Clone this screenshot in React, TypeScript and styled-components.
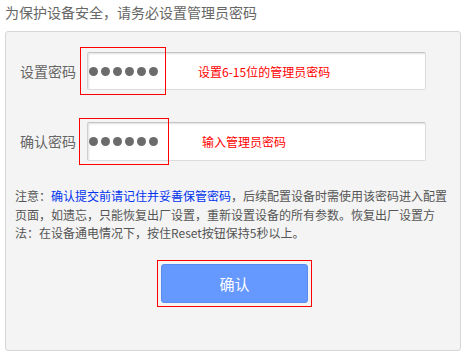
import React from "react";
import styled, { createGlobalStyle } from "styled-components";

const Global = createGlobalStyle`
  html, body { margin: 0; padding: 0; background: #ffffff; }
  body { font-family: "Noto Sans CJK SC", "Liberation Sans", sans-serif; }
`;

const Page = styled.div`
  width: 468px;
  height: 357px;
  padding: 0 7px 0 5px;
  box-sizing: border-box;
  overflow: hidden;
`;

const Title = styled.div`
  height: 31px;
  line-height: 24px;
  font-size: 14px;
  color: #666666;
`;

const Panel = styled.div`
  width: 456px;
  height: 320px;
  box-sizing: border-box;
  background: #f4f4f4;
  border: 1px solid #d6d6d6;
  border-radius: 3px;
  padding: 20px 0 0 0;
  display: flex;
  flex-direction: column;
`;

const Row = styled.div<{ $gap: number }>`
  display: flex;
  align-items: center;
  height: 38px;
  margin-bottom: ${(p) => p.$gap}px;
`;

const Label = styled.div`
  width: 81px;
  box-sizing: border-box;
  padding-left: 14px;
  font-size: 14px;
  color: #666666;
  line-height: 38px;
  white-space: nowrap;
`;

const Field = styled.div<{ $h: number }>`
  position: relative;
  width: 339px;
  height: ${(p) => p.$h}px;
  box-sizing: border-box;
  background: #ffffff;
  border: 1px solid #dcdcdc;
  border-top-color: #c4c4c4;
  border-left-color: #cfcfcf;
  border-radius: 2px;
  box-shadow: inset 1px 1px 2px rgba(0, 0, 0, 0.12);
  display: flex;
  align-items: center;
  padding-left: 1px;
`;

const Dots = styled.div`
  display: flex;
  gap: 3px;
`;

const Dot = styled.span`
  width: 9px;
  height: 9px;
  border-radius: 50%;
  background: #6b6b6b;
`;

const Hint = styled.span<{ $left: number }>`
  position: absolute;
  left: ${(p) => p.$left}px;
  top: 50%;
  transform: translateY(-50%);
  font-size: 12px;
  color: #ff0000;
  white-space: nowrap;
`;

const RedBox = styled.div<{ $l: number; $t: number; $w: number; $h: number }>`
  position: absolute;
  z-index: 2;
  left: ${(p) => p.$l}px;
  top: ${(p) => p.$t}px;
  width: ${(p) => p.$w}px;
  height: ${(p) => p.$h}px;
  box-sizing: border-box;
  border: 1px solid #ff0000;
  pointer-events: none;
`;

const Note = styled.p`
  margin: 27px 0 0 0;
  height: 56px;
  padding: 0 12px 0 9px;
  font-size: 12px;
  line-height: 18.5px;
  color: #555555;
`;

const Link = styled.span`
  color: #0033ee;
`;

const ButtonArea = styled.div`
  display: flex;
  justify-content: center;
  padding-left: 3px;
  margin-top: 17px;
`;

const ButtonWrap = styled.div`
  padding: 3px;
  border: 1px solid #ff0000;
`;

const Button = styled.button`
  width: 147px;
  height: 39px;
  background: #6699ff;
  border: 1px solid #5a8cf0;
  border-radius: 3px;
  outline: none;
  color: #ffffff;
  font-family: "Noto Sans CJK SC", "Liberation Sans", sans-serif;
  font-size: 15px;
  padding: 0;
  cursor: pointer;
  display: block;
`;

const DotRow = () => (
  <Dots>
    {Array.from({ length: 6 }).map((_, i) => (
      <Dot key={i} />
    ))}
  </Dots>
);

export default function App() {
  return (
    <>
      <Global />
      <Page>
        <Title>为保护设备安全，请务必设置管理员密码</Title>
        <Panel>
          <Row $gap={32}>
            <Label>设置密码</Label>
            <Field $h={38}>
              <DotRow />
              <Hint $left={110}>设置6-15位的管理员密码</Hint>
              <RedBox $l={-8} $t={-6} $w={86} $h={48} />
            </Field>
          </Row>
          <Row $gap={0}>
            <Label>确认密码</Label>
            <Field $h={39}>
              <DotRow />
              <Hint $left={114}>输入管理员密码</Hint>
              <RedBox $l={-9} $t={-5} $w={90} $h={47} />
            </Field>
          </Row>
          <Note>
            注意：<Link>确认提交前请记住并妥善保管密码</Link>，后续配置设备时需使用该密码进入配置页面，如遗忘，只能恢复出厂设置，重新设置设备的所有参数。恢复出厂设置方法：在设备通电情况下，按住Reset按钮保持5秒以上。
          </Note>
          <ButtonArea>
            <ButtonWrap>
              <Button>确认</Button>
            </ButtonWrap>
          </ButtonArea>
        </Panel>
      </Page>
    </>
  );
}
